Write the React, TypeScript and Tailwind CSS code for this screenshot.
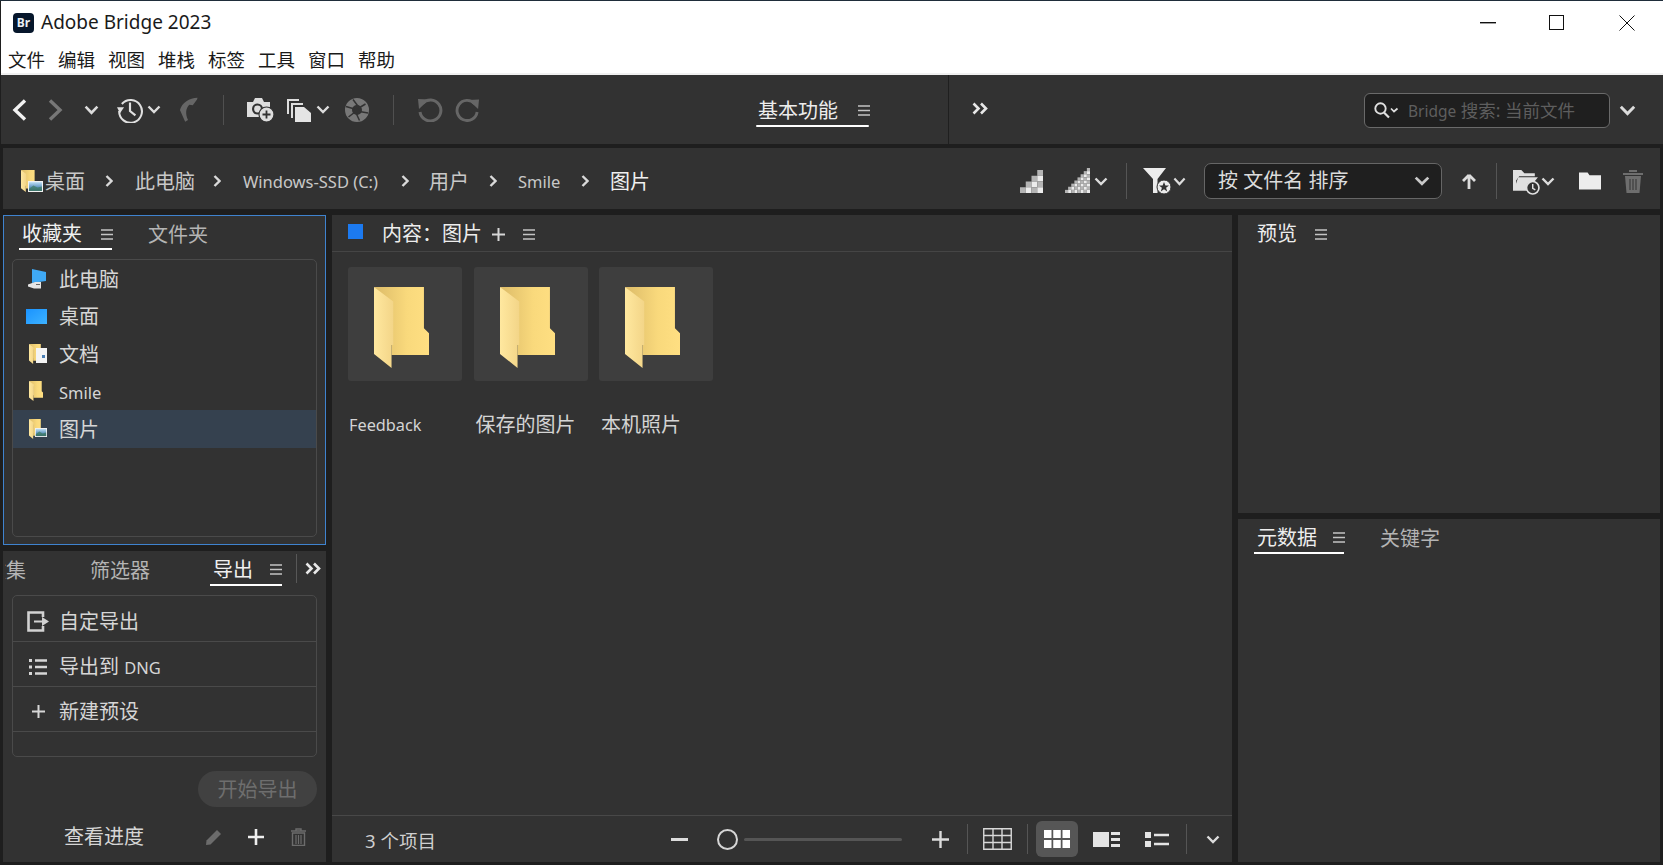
import React from "react";

const cn = (...a: (string | false | undefined)[]) => a.filter(Boolean).join(" ");

function Ham({ className }: { className?: string }) {
  return (
    <svg viewBox="0 0 12 11" className={cn("w-[12px] h-[11px] shrink-0", className)}>
      <path d="M0 1H12M0 5.5H12M0 10H12" stroke="#c4c4c4" strokeWidth="1.4" fill="none" />
    </svg>
  );
}

function ChevDown({ className, color = "#dcdcdc" }: { className: string; color?: string }) {
  return (
    <svg viewBox="0 0 14 9" preserveAspectRatio="none" className={cn("shrink-0", className)}>
      <path d="M1.5 1.5L7 7L12.5 1.5" stroke={color} strokeWidth="2.4" fill="none" />
    </svg>
  );
}

function ChevRightSmall({ className }: { className?: string }) {
  return (
    <svg viewBox="0 0 8 12" className={cn("w-[8px] h-[12px] shrink-0", className)}>
      <path d="M1.5 1L6.5 6L1.5 11" stroke="#dadada" strokeWidth="2.4" fill="none" />
    </svg>
  );
}

function DoubleChev({ className }: { className?: string }) {
  return (
    <svg viewBox="0 0 16 13" className={cn("w-[16px] h-[13px] shrink-0", className)}>
      <path d="M1.5 1.5L6.5 6.5L1.5 11.5M9 1.5L14 6.5L9 11.5" stroke="#e8e8e8" strokeWidth="2.6" fill="none" />
    </svg>
  );
}

function Sep({ className }: { className: string }) {
  return <div className={cn("w-px shrink-0", className)} />;
}

function Folder({ id, className }: { id: string; className?: string }) {
  return (
    <svg viewBox="130 232 163 242" preserveAspectRatio="none" className={cn("shrink-0", className)}>
      <defs>
        <linearGradient id={id + "b"} x1="0" x2="1" y1="0" y2="0">
          <stop offset="0" stopColor="#dcbb68" />
          <stop offset="0.6" stopColor="#f9d97c" />
          <stop offset="1" stopColor="#ffdf82" />
        </linearGradient>
        <linearGradient id={id + "f"} x1="0" x2="1" y1="0" y2="0">
          <stop offset="0" stopColor="#ffe89f" />
          <stop offset="1" stopColor="#f3d588" />
        </linearGradient>
      </defs>
      <path d="M130 232H278V355L293 370V435H182V300Z" fill={`url(#${id}b)`} />
      <path d="M130 232L187 275V405H182V474L130 432Z" fill={`url(#${id}f)`} />
    </svg>
  );
}

function PicOverlay({ id, className }: { id: string; className?: string }) {
  return (
    <svg viewBox="0 0 14 10" preserveAspectRatio="none" className={className}>
      <defs>
        <linearGradient id={id} x1="0" x2="0" y1="0" y2="1">
          <stop offset="0" stopColor="#bfe0f5" />
          <stop offset="0.6" stopColor="#5d93bf" />
          <stop offset="1" stopColor="#2d5f86" />
        </linearGradient>
      </defs>
      <rect width="14" height="10" fill="#f2f2f2" />
      <rect x="1" y="1" width="12" height="8" fill={`url(#${id})`} />
      <path d="M1 7L5 4L9 6L13 5V9H1Z" fill="#3f7a5c" opacity="0.7" />
    </svg>
  );
}

function FavPC() {
  return (
    <svg viewBox="0 0 19 20" className="w-[19px] h-[20px] ml-[2px] shrink-0">
      <path d="M4 0L18 3V12L4 14Z" fill="#3fa9f5" />
      <path d="M0 15.5L7 13H13V19.5H6L0 17.5Z" fill="#e4e4e4" />
      <rect x="8" y="15" width="4" height="1" fill="#666" />
    </svg>
  );
}

function FavDesktop() {
  return (
    <svg viewBox="0 0 21 15" className="w-[21px] h-[15px] shrink-0">
      <defs>
        <linearGradient id="dsk" x1="0" x2="1" y1="0" y2="1">
          <stop offset="0" stopColor="#1a93ff" />
          <stop offset="1" stopColor="#3db2ff" />
        </linearGradient>
      </defs>
      <rect width="21" height="15" fill="url(#dsk)" />
    </svg>
  );
}

function FavDocs() {
  return (
    <div className="relative w-[18px] h-[20px] ml-[3px] shrink-0">
      <Folder id="fd" className="w-[13px] h-[20px]" />
      <div className="absolute right-0 bottom-[1px] w-[11px] h-[15px] bg-[#f4f4f4] flex items-center justify-center">
        <div className="w-[3px] h-[3px] bg-[#4a7fb5] mt-[3px] ml-[3px]" />
      </div>
    </div>
  );
}

function FavPics() {
  return (
    <div className="relative w-[18px] h-[20px] ml-[3px] shrink-0">
      <Folder id="fp" className="w-[13px] h-[20px]" />
      <PicOverlay id="fpo" className="absolute right-0 bottom-[2px] w-[12px] h-[9px]" />
    </div>
  );
}

function TriGrid({ n, cell, className }: { n: number; cell: number; className?: string }) {
  const size = n * cell;
  const rects: React.ReactElement[] = [];
  for (let r = 0; r < n; r++) {
    for (let c = n - 1 - r; c < n; c++) {
      rects.push(
        <rect
          key={r + "-" + c}
          x={c * cell}
          y={r * cell}
          width={cell}
          height={cell}
          fill={(r + c) % 2 ? "#b4b4b4" : "#ececec"}
        />
      );
    }
  }
  return (
    <svg viewBox={`0 0 ${size} ${size}`} className={cn("shrink-0", className)}>
      {rects}
    </svg>
  );
}

function Cell({ label, id, pad }: { label: React.ReactNode; id: string; pad: string }) {
  return (
    <div className="flex flex-col w-[114px] shrink-0">
      <div className="w-[114px] h-[114px] bg-[#3e3e3e] rounded-[3px] pl-[26px] pt-[20px]">
        <Folder id={id} className="w-[55px] h-[81px]" />
      </div>
      <div className={cn("mt-[33px] h-[22px] flex items-center whitespace-nowrap text-[#d4d4d4] text-[20px]", pad)}>
        {label}
      </div>
    </div>
  );
}

function FavRow({ icon, label, active }: { icon: React.ReactNode; label: React.ReactNode; active?: boolean }) {
  return (
    <div className={cn("h-[37.5px] flex items-center pl-[13px] shrink-0", active && "bg-[#35414f]")}>
      <div className="w-[24px] flex items-center shrink-0">{icon}</div>
      <div className="ml-[9px] mt-[2px] text-[20px] text-[#d6d6d6] whitespace-nowrap">{label}</div>
    </div>
  );
}

function ExpRow({ icon, label }: { icon: React.ReactNode; label: React.ReactNode }) {
  return (
    <div className="h-[45px] flex items-center pl-[13px] pt-[5px] border-b border-[#4a4a4a] shrink-0">
      <div className="w-[24px] flex items-center justify-center shrink-0">{icon}</div>
      <div className="ml-[9px] text-[20px] text-[#d6d6d6] whitespace-nowrap">{label}</div>
    </div>
  );
}

export default function App() {
  return (
    <div className="w-[1663px] h-[865px] overflow-hidden bg-[#1e1e1e] flex flex-col font-['Noto_Sans','Noto_Sans_CJK_SC',sans-serif]">
      <div className="h-px bg-[#1f2d3a] shrink-0" />
      {/* Title bar */}
      <div className="h-[43px] bg-white flex items-center ml-px shrink-0">
        <div className="ml-[12px] w-[21px] h-[20px] rounded-[4px] bg-[#06162b] flex items-center justify-center text-[12px] font-bold text-[#e8eef5] leading-none">
          Br
        </div>
        <div className="ml-[7px] text-[19px] text-[#1a1a1a] whitespace-nowrap">Adobe Bridge 2023</div>
        <svg viewBox="0 0 16 2" className="ml-auto w-[16px] h-[2px] shrink-0">
          <rect width="16" height="1.4" fill="#111" />
        </svg>
        <svg viewBox="0 0 15 15" className="ml-[53px] w-[15px] h-[15px] shrink-0">
          <rect x="0.5" y="0.5" width="14" height="14" fill="none" stroke="#111" />
        </svg>
        <svg viewBox="0 0 16 16" className="ml-[55px] mr-[28px] w-[16px] h-[16px] shrink-0">
          <path d="M0.5 0.5L15.5 15.5M15.5 0.5L0.5 15.5" stroke="#111" strokeWidth="1" fill="none" />
        </svg>
      </div>
      {/* Menu */}
      <div className="h-[29px] bg-white flex items-center gap-[14px] pl-[7px] ml-px pt-[2px] shrink-0 text-[18.5px] text-[#1a1a1a]">
        {["文件", "编辑", "视图", "堆栈", "标签", "工具", "窗口", "帮助"].map((m) => (
          <div key={m} className="w-[36px] whitespace-nowrap">{m}</div>
        ))}
      </div>
      <div className="h-[2px] bg-[#f0f0f0] ml-px shrink-0" />

      {/* Toolbar */}
      <div className="h-[69px] bg-[#323232] ml-px flex items-center shrink-0">
        <svg viewBox="0 0 15 22" className="ml-[11px] w-[15px] h-[22px] shrink-0">
          <path d="M13 1.5L3 11L13 20.5" stroke="#f2f2f2" strokeWidth="3.4" fill="none" />
        </svg>
        <svg viewBox="0 0 15 22" className="ml-[21px] w-[15px] h-[22px] shrink-0">
          <path d="M2 1.5L12 11L2 20.5" stroke="#777777" strokeWidth="3.4" fill="none" />
        </svg>
        <ChevDown className="ml-[21px] w-[15px] h-[10px]" />
        <svg viewBox="0 0 24 24" className="ml-[18px] w-[26px] h-[26px] shrink-0">
          <path d="M4.5 6.5A10.5 10.5 0 1 1 2 13" stroke="#e0e0e0" strokeWidth="1.9" fill="none" />
          <path d="M0 9.5H6.5L2.8 15Z" fill="#e0e0e0" />
          <path d="M12 5V13L17 17" stroke="#e0e0e0" strokeWidth="2" fill="none" />
        </svg>
        <ChevDown className="ml-[4px] w-[14px] h-[9px]" />
        <svg viewBox="0 0 20 27" className="ml-[18px] w-[19px] h-[27px] shrink-0">
          <path d="M19.5 1C11 1.5 3 6 1 14L6.5 26.5L9.5 24.5C6.5 18 7 12 11 8.5L14.5 9L19 3Z" fill="#666666" />
        </svg>
        <Sep className="ml-[25px] h-[30px] bg-[#505050]" />
        <svg viewBox="0 0 27 25" className="ml-[23px] w-[27px] h-[25px] shrink-0">
          <path d="M0 5H6L8 1H15L17 5H23V20H0Z" fill="#dedede" />
          <circle cx="10.5" cy="12" r="5.5" fill="#323232" />
          <circle cx="10.5" cy="12" r="3.4" fill="#dedede" />
          <circle cx="19.5" cy="17.5" r="7.5" fill="#dedede" stroke="#323232" strokeWidth="1.2" />
          <path d="M19.5 13.5V21.5M15.5 17.5H23.5" stroke="#323232" strokeWidth="1.8" />
        </svg>
        <svg viewBox="0 0 26 24" className="ml-[12px] w-[26px] h-[24px] shrink-0">
          <path d="M1 1H13V3H3V16H1Z" fill="#dedede" />
          <path d="M5 5H17V7H7V20H5Z" fill="#dedede" />
          <path d="M9 9H18L25 15V24H9Z" fill="#e4e4e4" />
        </svg>
        <ChevDown className="ml-[4px] w-[14px] h-[9px]" />
        <svg viewBox="0 0 24 24" className="ml-[15px] w-[24px] h-[24px] shrink-0">
          <circle cx="12" cy="12" r="8.5" stroke="#787878" strokeWidth="7" fill="none" />
          <path d="M8 1.5L14 9.5M20.5 6L13 10.5M23 15L14.5 13.5M14.5 22.5L11 15M3.5 19L10 14M1 8.5L9.5 11" stroke="#323232" strokeWidth="1.5" fill="none" />
        </svg>
        <Sep className="ml-[24px] h-[30px] bg-[#505050]" />
        <svg viewBox="0 0 26 24" className="ml-[23px] w-[26px] h-[24px] shrink-0">
          <path d="M5.5 5.5A10.5 10.5 0 1 1 3 14" stroke="#666666" strokeWidth="3" fill="none" />
          <path d="M1 1L12 1.5L2 11Z" fill="#666666" />
        </svg>
        <svg viewBox="0 0 26 24" className="ml-[12px] w-[25px] h-[24px] shrink-0">
          <path d="M20.5 5.5A10.5 10.5 0 1 0 23 14" stroke="#666666" strokeWidth="3" fill="none" />
          <path d="M25 1L14 1.5L24 11Z" fill="#666666" />
        </svg>
        <div className="ml-[276px] w-[113px] h-[69px] flex flex-col shrink-0">
          <div className="mt-[22px] h-[27px] flex items-center pl-[2px]">
            <div className="text-[20px] text-[#ededed] whitespace-nowrap">基本功能</div>
            <Ham className="ml-[20px]" />
          </div>
          <div className="mt-[1px] h-[2px] rounded-full bg-white" />
        </div>
        <Sep className="ml-[79px] self-stretch bg-[#1f1f1f]" />
        <DoubleChev className="ml-[23px] mb-[3px]" />
        <div className="ml-[376px] w-[246px] h-[35px] mt-[2px] bg-[#1f1f1f] border border-[#6a6a6a] rounded-[6px] flex items-center pl-[9px] shrink-0">
          <svg viewBox="0 0 25 17" className="w-[25px] h-[17px] shrink-0">
            <circle cx="6.5" cy="6.5" r="5.2" stroke="#e0e0e0" strokeWidth="1.9" fill="none" />
            <path d="M10 10.5L15 15.5" stroke="#e0e0e0" strokeWidth="2.2" />
            <path d="M17 6.5L20 9.5L23.5 6.5" stroke="#e0e0e0" strokeWidth="1.7" fill="none" />
          </svg>
          <div className="ml-[9px] text-[17.5px] text-[#5e5e5e] whitespace-nowrap">
            <span className="text-[15.5px]">Bridge</span> 搜索: 当前文件
          </div>
        </div>
        <ChevDown className="ml-[9px] w-[17px] h-[11px] mt-[2px]" />
      </div>

      <div className="h-[4px] shrink-0" />

      {/* Path bar */}
      <div className="h-[61px] bg-[#323232] ml-[3px] mr-[3px] flex items-center pt-[5px] shrink-0 text-[20px] text-[#c8c8c8]">
        <div className="relative ml-[18px] w-[22px] h-[23px] shrink-0">
          <Folder id="pb" className="w-[15px] h-[22px]" />
          <PicOverlay id="pbo" className="absolute right-0 bottom-[1px] w-[15px] h-[11px]" />
        </div>
        <div className="ml-[2px] mt-[2px] w-[40px] whitespace-nowrap">桌面</div>
        <ChevRightSmall className="ml-[20px]" />
        <div className="ml-[22px] mt-[2px] w-[60px] whitespace-nowrap">此电脑</div>
        <ChevRightSmall className="ml-[18px]" />
        <div className="ml-[22px] mt-[2px] w-[136px] whitespace-nowrap text-[16.5px]">Windows-SSD (C:)</div>
        <ChevRightSmall className="ml-[22px]" />
        <div className="ml-[20px] mt-[2px] w-[40px] whitespace-nowrap">用户</div>
        <ChevRightSmall className="ml-[20px]" />
        <div className="ml-[21px] mt-[2px] w-[42px] whitespace-nowrap text-[16.5px]">Smile</div>
        <ChevRightSmall className="ml-[21px]" />
        <div className="ml-[21px] mt-[2px] w-[40px] whitespace-nowrap text-[#f0f0f0]">图片</div>

        <div className="flex-1" />
        <TriGrid n={4} cell={6} className="w-[23px] h-[23px]" />
        <TriGrid n={8} cell={3} className="ml-[22px] w-[25px] h-[25px] mb-[2px]" />
        <ChevDown className="ml-[4px] w-[14px] h-[9px]" />
        <Sep className="ml-[18px] h-[36px] -mt-[1px] bg-[#555555]" />
        <svg viewBox="0 0 28 26" className="ml-[16px] w-[28px] h-[26px] shrink-0">
          <path d="M0 0H23L14.5 11V25H10V11Z" fill="#ececec" />
          <circle cx="21" cy="19" r="7" fill="#ececec" stroke="#323232" strokeWidth="1" />
          <path d="M21 14L22.4 17.6H26L23.1 19.8L24.2 23.4L21 21.2L17.8 23.4L18.9 19.8L16 17.6H19.6Z" fill="#323232" />
        </svg>
        <ChevDown className="ml-[2px] w-[13px] h-[9px]" />
        <div className="ml-[18px] w-[238px] h-[36px] -mt-[1px] bg-[#1f1f1f] border border-[#666666] rounded-[7px] flex items-center pl-[13px] shrink-0">
          <div className="text-[20px] text-[#dcdcdc] whitespace-nowrap">按 文件名 排序</div>
          <ChevDown className="ml-auto mr-[11px] w-[16px] h-[10px]" color="#c8c8c8" />
        </div>
        <svg viewBox="0 0 14 15" className="ml-[20px] w-[14px] h-[15px] shrink-0">
          <path d="M7 1L1 7M7 1L13 7M7 1V15" stroke="#dcdcdc" strokeWidth="2.8" fill="none" />
        </svg>
        <Sep className="ml-[20px] h-[36px] -mt-[1px] bg-[#555555]" />
        <svg viewBox="0 0 26 26" className="ml-[16px] w-[27px] h-[27px] shrink-0">
          <path d="M0 2H8L11 5H21V8H6L3 12V20H14V22H0Z" fill="#e0e0e0" />
          <path d="M5 9H24L20 14A7 7 0 0 0 13 21H1Z" fill="#e0e0e0" />
          <circle cx="19" cy="19" r="6" fill="#323232" stroke="#e0e0e0" strokeWidth="1.6" />
          <path d="M19 15.5V19.5L21.5 21" stroke="#e0e0e0" strokeWidth="1.4" fill="none" />
        </svg>
        <ChevDown className="ml-[1px] w-[14px] h-[9px]" />
        <svg viewBox="0 0 23 18" className="ml-[24px] w-[22px] h-[18px] shrink-0">
          <path d="M0 0H9L11 3H23V18H0Z" fill="#ededed" />
        </svg>
        <svg viewBox="0 0 20 23" className="ml-[22px] mr-[17px] w-[20px] h-[23px] shrink-0">
          <path d="M0 3H20V5H0ZM6 0H14V2H6Z" fill="#6e6e6e" />
          <path d="M2 6H18L16.5 23H3.5Z" fill="#6e6e6e" />
          <path d="M7 9V20M10 9V20M13 9V20" stroke="#323232" strokeWidth="1" />
        </svg>
      </div>

      <div className="h-[6px] shrink-0" />

      {/* Main */}
      <div className="h-[647px] flex gap-[6px] pl-[3px] pr-[3px] shrink-0">
        {/* Left column */}
        <div className="w-[323px] flex flex-col gap-[6px] shrink-0">
          <div className="h-[330px] bg-[#323232] border border-[#3f83cf] flex flex-col shrink-0">
            <div className="h-[34px] flex shrink-0">
              <div className="ml-[15px] w-[93px] h-[34px] pt-[4px] border-b-2 border-white flex items-center pl-[3px] shrink-0">
                <div className="text-[20px] text-[#f0f0f0] whitespace-nowrap">收藏夹</div>
                <Ham className="ml-[19px]" />
              </div>
              <div className="ml-[36px] h-[34px] pt-[4px] flex items-center text-[20px] text-[#b4b4b4] whitespace-nowrap">文件夹</div>
            </div>
            <div className="mt-[9px] ml-[8px] w-[305px] h-[278px] border border-[#4a4a4a] rounded-[5px] flex flex-col overflow-hidden">
              <FavRow icon={<FavPC />} label="此电脑" />
              <FavRow icon={<FavDesktop />} label="桌面" />
              <FavRow icon={<FavDocs />} label="文档" />
              <FavRow
                icon={<div className="ml-[3px]"><Folder id="fs" className="w-[14px] h-[20px]" /></div>}
                label={<span className="text-[16.5px]">Smile</span>}
              />
              <FavRow icon={<FavPics />} label="图片" active />
            </div>
          </div>
          <div className="h-[311px] bg-[#323232] flex flex-col shrink-0">
            <div className="h-[35px] flex items-stretch shrink-0 text-[20px]">
              <div className="ml-[2px] w-[21px] pt-[4px] overflow-hidden flex justify-end items-center text-[#b4b4b4] whitespace-nowrap">
                <span className="shrink-0">收集</span>
              </div>
              <div className="ml-[64px] w-[60px] pt-[4px] flex items-center text-[#b4b4b4] whitespace-nowrap">筛选器</div>
              <div className="ml-[60px] w-[72px] pt-[4px] border-b-2 border-white flex items-center pl-[3px]">
                <span className="w-[40px] text-[#f0f0f0] whitespace-nowrap">导出</span>
                <Ham className="ml-[17px]" />
              </div>
              <Sep className="ml-[14px] mt-[3px] h-[29px] bg-[#585858]" />
              <DoubleChev className="ml-[8px] mt-[11px]" />
            </div>
            <div className="mt-[9px] ml-[9px] w-[305px] h-[162px] pt-[1px] border border-[#4a4a4a] rounded-[5px] flex flex-col shrink-0">
              <ExpRow
                label="自定导出"
                icon={
                  <svg viewBox="0 0 22 21" className="w-[22px] h-[21px] shrink-0">
                    <path d="M16 6V1.5H1.5V19.5H16V15" stroke="#d2d2d2" strokeWidth="2.6" fill="none" />
                    <path d="M7 9.5H15V6L22 10.5L15 15V11.5H7Z" fill="#d2d2d2" />
                  </svg>
                }
              />
              <ExpRow
                label={<>导出到 <span className="text-[16.5px]">DNG</span></>}
                icon={
                  <svg viewBox="0 0 18 18" className="w-[18px] h-[18px] shrink-0">
                    <path d="M0 1H3V4H0ZM0 7.5H3V10.5H0ZM0 14H3V17H0Z" fill="#d6d6d6" />
                    <path d="M6 2.5H18M6 9H18M6 15.5H18" stroke="#d6d6d6" strokeWidth="2.4" />
                  </svg>
                }
              />
              <ExpRow
                label="新建预设"
                icon={
                  <svg viewBox="0 0 13 13" className="w-[13px] h-[13px] shrink-0">
                    <path d="M6.5 0V13M0 6.5H13" stroke="#d6d6d6" strokeWidth="2" />
                  </svg>
                }
              />
            </div>
            <div className="mt-[14px] ml-[195px] w-[119px] h-[36px] pt-[2px] rounded-full bg-[#414141] flex items-center justify-center text-[20px] text-[#6e6e6e] whitespace-nowrap shrink-0">
              开始导出
            </div>
            <div className="mt-[13px] h-[34px] flex items-center pl-[61px] shrink-0">
              <div className="w-[80px] text-[20px] text-[#d6d6d6] whitespace-nowrap">查看进度</div>
              <svg viewBox="0 0 15 15" className="ml-[62px] w-[15px] h-[15px] shrink-0">
                <path d="M11 0L15 4L4.5 14.5L0 15L0.5 10.5Z" fill="#6c6c6c" />
              </svg>
              <svg viewBox="0 0 16 16" className="ml-[27px] w-[16px] h-[16px] shrink-0">
                <path d="M8 0V16M0 8H16" stroke="#efefef" strokeWidth="2.6" />
              </svg>
              <svg viewBox="0 0 15 18" className="ml-[27px] w-[15px] h-[18px] shrink-0">
                <path d="M0 3H15M5 3V1H10V3" stroke="#6c6c6c" strokeWidth="1.4" fill="none" />
                <path d="M1.5 5H13.5V17.5H1.5Z" stroke="#6c6c6c" strokeWidth="1.4" fill="none" />
                <path d="M5 7V16M7.5 7V16M10 7V16" stroke="#6c6c6c" strokeWidth="1.2" />
              </svg>
            </div>
          </div>
        </div>

        {/* Content */}
        <div className="w-[900px] bg-[#323232] flex flex-col shrink-0">
          <div className="h-[37px] pt-[2px] flex items-center border-b border-[#454545] shrink-0">
            <div className="ml-[16px] w-[15px] h-[15px] bg-[#1c7af0] -mt-[5px] shrink-0" />
            <div className="ml-[19px] w-[100px] text-[20px] text-[#ededed] whitespace-nowrap">内容：图片</div>
            <svg viewBox="0 0 13 13" className="ml-[10px] w-[13px] h-[13px] shrink-0">
              <path d="M6.5 0V13M0 6.5H13" stroke="#d6d6d6" strokeWidth="2" />
            </svg>
            <Ham className="ml-[18px]" />
          </div>
          <div className="flex-1 flex gap-[11.5px] pl-[16px] pt-[15px]">
            <Cell id="c1" label={<span className="text-[16.3px]">Feedback</span>} pad="pl-[1px]" />
            <Cell id="c2" label="保存的图片" pad="pl-[2px]" />
            <Cell id="c3" label="本机照片" pad="pl-[2px]" />
          </div>
          <div className="h-[47px] border-t border-[#484848] flex items-center shrink-0">
            <div className="ml-[33px] mt-[3px] text-[18.5px] text-[#cfcfcf] whitespace-nowrap">3 个项目</div>
            <div className="flex-1" />
            <svg viewBox="0 0 17 3" className="w-[17px] h-[3px] shrink-0">
              <rect width="17" height="3" fill="#dcdcdc" />
            </svg>
            <div className="ml-[29px] w-[21px] h-[21px] rounded-full border-[2.5px] border-[#d6d6d6] shrink-0" />
            <div className="ml-[6px] w-[158px] h-[3px] rounded-full bg-[#555555] shrink-0" />
            <svg viewBox="0 0 17 17" className="ml-[30px] w-[17px] h-[17px] shrink-0">
              <path d="M8.5 0V17M0 8.5H17" stroke="#dcdcdc" strokeWidth="2.4" />
            </svg>
            <Sep className="ml-[18px] h-[30px] bg-[#555555]" />
            <svg viewBox="0 0 29 22" className="ml-[15px] w-[29px] h-[22px] shrink-0">
              <path d="M0.75 0.75H28.25V21.25H0.75ZM0.75 7.5H28.25M0.75 14.5H28.25M10 0.75V21.25M19 0.75V21.25" stroke="#d8d8d8" strokeWidth="1.4" fill="none" />
            </svg>
            <Sep className="ml-[15px] h-[30px] bg-[#555555]" />
            <div className="ml-[8px] w-[42px] h-[36px] bg-[#565656] rounded-[6px] flex items-center justify-center shrink-0">
              <svg viewBox="0 0 26 18" className="w-[26px] h-[18px] shrink-0">
                <path d="M0 0H7.5V8H0ZM9.25 0H16.75V8H9.25ZM18.5 0H26V8H18.5ZM0 10H7.5V18H0ZM9.25 10H16.75V18H9.25ZM18.5 10H26V18H18.5Z" fill="#ffffff" />
              </svg>
            </div>
            <svg viewBox="0 0 27 15" className="ml-[15px] w-[27px] h-[15px] shrink-0">
              <rect width="16" height="15" fill="#e4e4e4" />
              <path d="M18 1.5H27M18 7.5H27M18 13.5H27" stroke="#e4e4e4" strokeWidth="3" />
            </svg>
            <svg viewBox="0 0 24 15" className="ml-[25px] w-[24px] h-[15px] shrink-0">
              <path d="M0 0H6V6H0ZM0 9H6V15H0Z" fill="#e4e4e4" />
              <path d="M9 3H24M9 12H24" stroke="#e4e4e4" strokeWidth="2.6" />
            </svg>
            <Sep className="ml-[17px] h-[30px] bg-[#555555]" />
            <ChevDown className="ml-[19px] mr-[12px] w-[14px] h-[9px]" />
          </div>
        </div>

        {/* Right column */}
        <div className="w-[422px] flex flex-col gap-[6px] shrink-0">
          <div className="h-[298px] bg-[#323232] shrink-0">
            <div className="h-[36px] pt-[2px] flex items-center pl-[19px]">
              <div className="w-[40px] text-[20px] text-[#ededed] whitespace-nowrap">预览</div>
              <Ham className="ml-[18px]" />
            </div>
          </div>
          <div className="h-[343px] bg-[#323232] shrink-0">
            <div className="h-[35px] flex">
              <div className="ml-[16px] w-[90px] h-[35px] pt-[4px] border-b-2 border-white flex items-center pl-[3px] shrink-0">
                <div className="w-[60px] text-[20px] text-[#ededed] whitespace-nowrap">元数据</div>
                <Ham className="ml-[16px]" />
              </div>
              <div className="ml-[36px] h-[35px] pt-[4px] flex items-center text-[20px] text-[#b4b4b4] whitespace-nowrap">关键字</div>
            </div>
          </div>
        </div>
      </div>
    </div>
  );
}
